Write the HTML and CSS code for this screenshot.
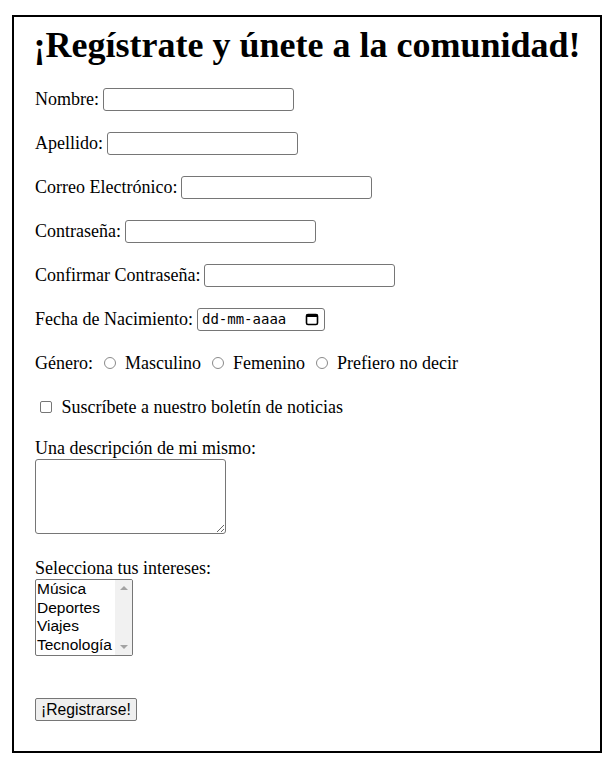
FILE: index.html
```html
<!DOCTYPE html>
<html lang="es">
<head>
<meta charset="utf-8">
<title>Registro</title>
<link rel="stylesheet" href="styles.css">
</head>
<body>
<form class="card">
  <h1 class="title">¡Regístrate y únete a la comunidad!</h1>
  <p class="row"><label class="lbl" for="nombre">Nombre:</label> <input class="field" type="text" id="nombre"></p>
  <p class="row"><label class="lbl" for="apellido">Apellido:</label> <input class="field" type="text" id="apellido"></p>
  <p class="row"><label class="lbl" for="correo">Correo Electrónico:</label> <input class="field" type="email" id="correo"></p>
  <p class="row"><label class="lbl" for="pass">Contraseña:</label> <input class="field" type="password" id="pass"></p>
  <p class="row"><label class="lbl" for="pass2">Confirmar Contraseña:</label> <input class="field" type="password" id="pass2"></p>
  <p class="row"><label class="lbl" for="fecha">Fecha de Nacimiento:</label> <span class="date"><span class="date-text">dd-mm-aaaa</span><svg class="cal" width="14" height="14" viewBox="0 0 14 14"><rect x="1.5" y="2.5" width="11" height="10" rx="1.5" fill="none" stroke="#000" stroke-width="1.6"/><rect x="1.5" y="2.5" width="11" height="2.5" fill="#000"/></svg></span></p>
  <p class="row">Género: <span class="radio"></span> Masculino <span class="radio"></span> Femenino <span class="radio"></span> Prefiero no decir</p>
  <p class="row check-row"><span class="check"></span> Suscríbete a nuestro boletín de noticias</p>
  <p class="block">Una descripción de mi mismo:<br><textarea class="area"></textarea></p>
  <p class="block sel-block">Selecciona tus intereses:<br>
    <span class="listbox">
      <span class="options">
        <span class="opt">Música</span>
        <span class="opt">Deportes</span>
        <span class="opt">Viajes</span>
        <span class="opt">Tecnología</span>
      </span>
      <span class="scroll"><span class="arrow-up"></span><span class="arrow-down"></span></span>
    </span>
  </p>
  <p class="submit-row"><button class="btn" type="button">¡Registrarse!</button></p>
</form>
</body>
</html>
```

FILE: styles.css
```css
html, body {
  margin: 0;
  padding: 0;
  background: #fff;
}
body {
  font-family: "Liberation Serif", "Times New Roman", serif;
  font-size: 18px;
  color: #000;
}
.card {
  margin: 15px 11px 12px 12px;
  border: 2px solid #000;
  padding: 0 20px 0 21px;
  height: 738px;
  box-sizing: border-box;
}
.title {
  font-size: 36px;
  font-weight: bold;
  text-align: center;
  margin: 8px -20px 20px -21px;
  line-height: 41px;
}
.row {
  margin: 0 0 18px 0;
  height: 26px;
  display: flex;
  align-items: center;
  white-space: pre;
}
.field {
  width: 191px;
  height: 23px;
  box-sizing: border-box;
  border: 1px solid #767676;
  border-radius: 3px;
  margin: 0 0 0 4px;
  padding: 1px 2px;
  font: 15px "Liberation Sans", Arial, sans-serif;
}
.date {
  display: inline-flex;
  align-items: center;
  margin-left: 4px;
  height: 23px;
  width: 128px;
  box-sizing: border-box;
  border: 1px solid #767676;
  border-radius: 3px;
  padding: 0 5px 0 4px;
  justify-content: space-between;
}
.date-text {
  font: 14px "DejaVu Sans Mono", "Liberation Mono", monospace;
}
.cal {
  display: block;
}
.radio {
  display: inline-block;
  width: 10px;
  height: 10px;
  border: 1px solid #8a8a8a;
  border-radius: 50%;
  margin: 0 4px 0 7px;
}
.check-row {
  padding-left: 5px;
}
.check {
  display: inline-block;
  width: 10px;
  height: 10px;
  border: 1px solid #767676;
  border-radius: 2px;
  margin-right: 5px;
}
.block {
  margin: 0 0 18px 0;
  line-height: 21px;
}
.area {
  display: block;
  width: 191px;
  height: 75px;
  box-sizing: border-box;
  border: 1px solid #767676;
  border-radius: 3px;
  margin: 0;
  resize: both;
  font: 15px "Liberation Mono", monospace;
}
.sel-block {
  margin-top: 24px;
}
.listbox {
  display: flex;
  width: 98px;
  height: 77px;
  box-sizing: border-box;
  border: 1px solid #767676;
  border-radius: 2px;
  overflow: hidden;
}
.options {
  flex: 1;
  display: flex;
  flex-direction: column;
  padding-left: 1px;
  font: 15.5px "Liberation Sans", Arial, sans-serif;
  line-height: 18.5px;
}
.opt {
  white-space: nowrap;
}
.scroll {
  width: 17px;
  background: #f1f1f1;
  display: flex;
  flex-direction: column;
  justify-content: space-between;
  align-items: center;
  padding: 6px 0;
}
.arrow-up {
  width: 0;
  height: 0;
  border-left: 4px solid transparent;
  border-right: 4px solid transparent;
  border-bottom: 4px solid #a3a3a3;
}
.arrow-down {
  width: 0;
  height: 0;
  border-left: 4px solid transparent;
  border-right: 4px solid transparent;
  border-top: 4px solid #a3a3a3;
}
.submit-row {
  margin: 42px 0 0 0;
}
.btn {
  font: 15.7px "Liberation Sans", Arial, sans-serif;
  height: 23px;
  padding: 0 5px;
  border: 1px solid #767676;
  border-radius: 2px;
  background: #efefef;
  color: #000;
}
```
